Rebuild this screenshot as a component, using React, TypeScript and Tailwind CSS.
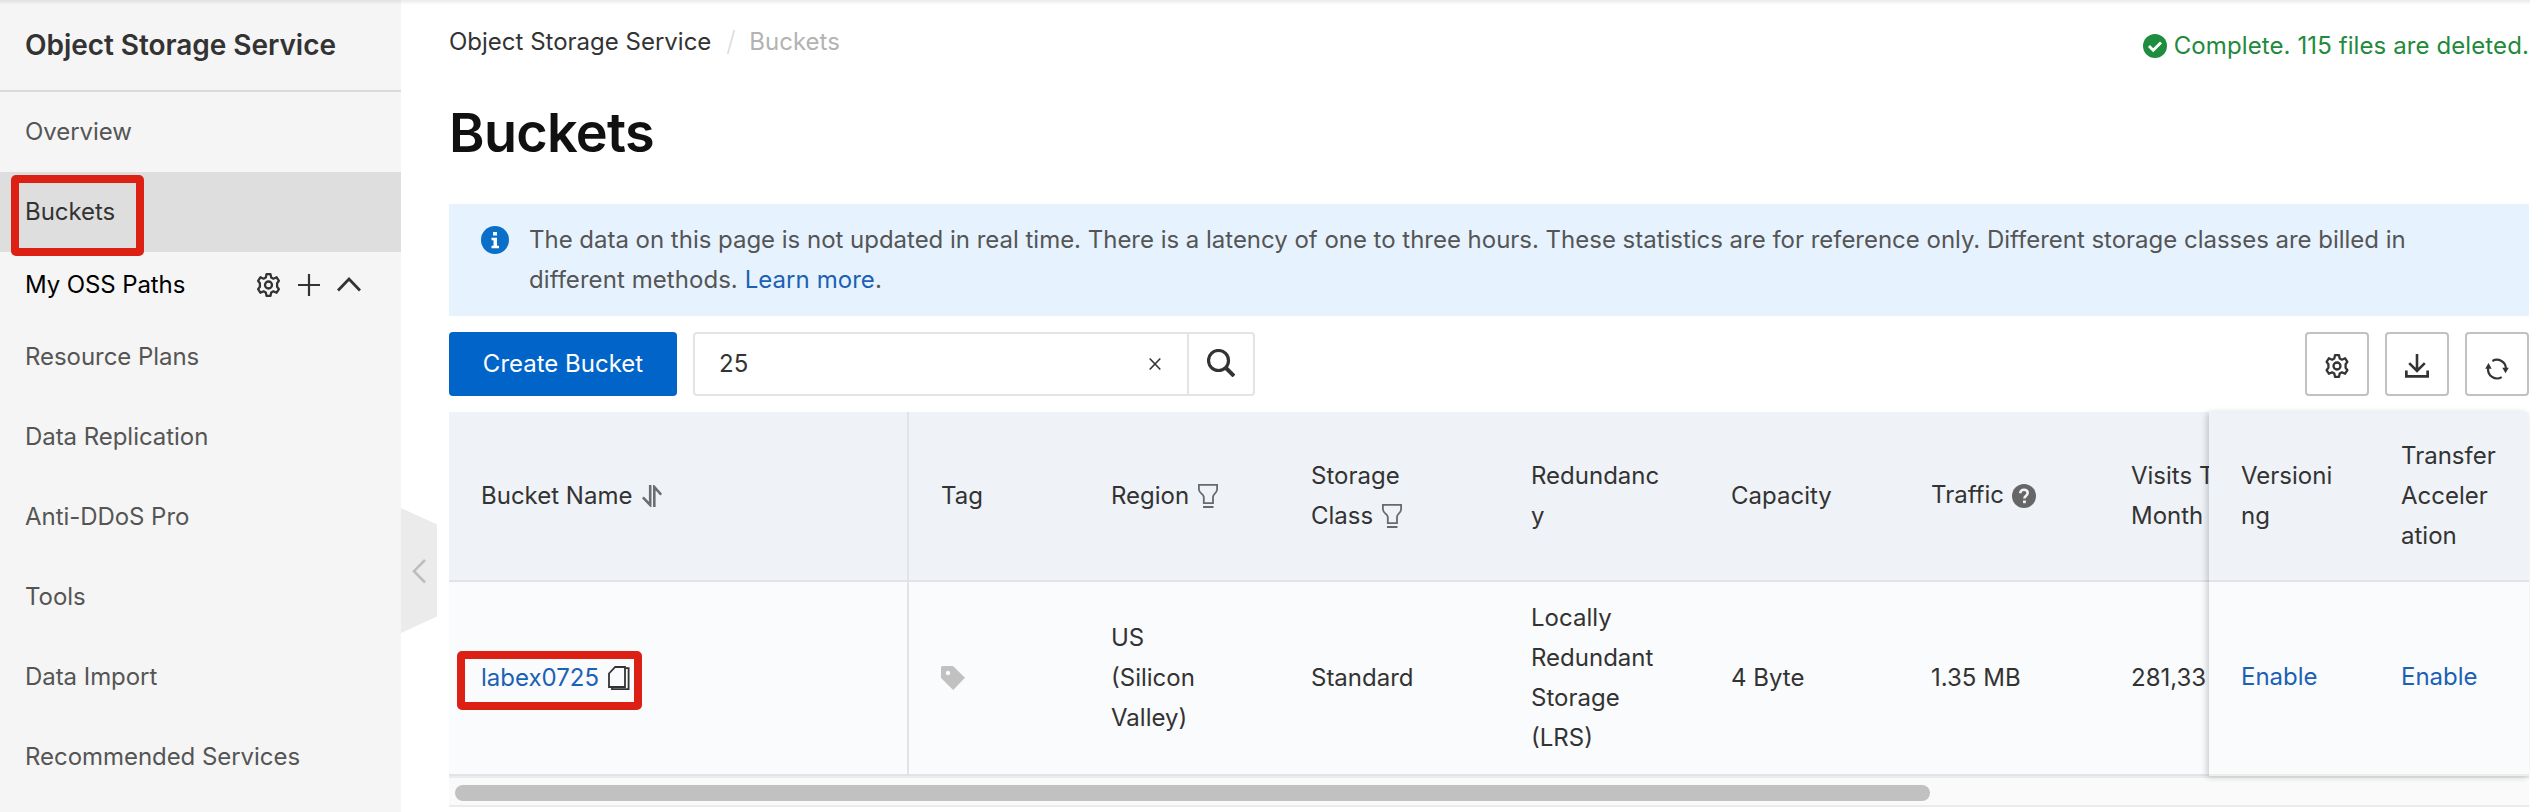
import type { ReactNode } from 'react';

function GearIcon({ className }: { className?: string }) {
  return (
    <svg viewBox="0 0 24 24" fill="none" stroke="currentColor" strokeWidth="2.3" strokeLinejoin="round" className={className}>
      <path d="M10 1.2h4l.7 3.3 2.2 1.2 3.2-1.4 2.3 3.6-1.8 2.4v3.4l1.8 2.4-2.3 3.6-3.2-1.4-2.2 1.2-.7 3.3h-4l-.7-3.3-2.2-1.2-3.2 1.4-2.3-3.6 1.8-2.4v-3.4L1.6 7.9l2.3-3.6 3.2 1.4 2.2-1.2z" />
      <circle cx="12" cy="12" r="3.5" />
    </svg>
  );
}

function FilterIcon() {
  return (
    <svg viewBox="0 0 22 24" fill="none" stroke="#666a6e" strokeWidth="1.8" className="h-6 w-[22px] shrink-0">
      <path d="M1.9 .9h18.200v4.600q-.3 2.300-2.100 3.900-1.800 1.600-2 3.400v6.300H6.800v-6.300q-.2-1.800-2.500-3.400-2.100-1.600-2.400-3.900z" />
      <path d="M6 23h10.500" strokeWidth="2" />
    </svg>
  );
}

function SortIcon() {
  return (
    <svg viewBox="0 0 20 22" fill="none" stroke="#6b6d70" strokeWidth="2.6" className="h-[22px] w-5">
      <path d="M8.2 0v20L.9 12.300" />
      <path d="M12.300 22V2l6.900 7.700" />
    </svg>
  );
}

function CopyIcon() {
  return (
    <svg viewBox="0 0 22 24" fill="none" stroke="#333" className="h-6 w-[22px]">
      <path d="M7.2 1h9.8v20H1V7.5z" strokeWidth="1.8" />
      <path d="M17.5 2.2H20.600V23.100H4v-2" strokeWidth="1.8" />
    </svg>
  );
}

function TagIcon() {
  return (
    <svg viewBox="0 0 24 24" className="h-6 w-6">
      <path fill="#c1c1c1" fillRule="evenodd" d="M0 1.5Q0 0 1.5 0H12l12 11.800L12.200 24 0 12zM7 4.800a2.200 2.200 0 1 0 0 4.400 2.200 2.200 0 0 0 0-4.400z" />
    </svg>
  );
}

function HelpIcon() {
  return (
    <svg viewBox="0 0 24 24" className="h-6 w-6">
      <circle cx="12" cy="12" r="12" fill="#666" />
      <path d="M8.300 9.300c0-2.200 1.500-3.600 3.700-3.600s3.700 1.300 3.700 3.300c0 2.500-3.300 2.800-3.300 5.400" fill="none" stroke="#eff3f8" strokeWidth="2.6" />
      <path d="M11 16.500h2.900v2.700H11z" fill="#eff3f8" />
    </svg>
  );
}

function Highlight({ className }: { className: string }) {
  return <div className={`pointer-events-none absolute z-20 rounded-[5px] border-8 border-[#dc2114] ${className}`} />;
}

function NavItem({ label, active }: { label: string; active?: boolean }) {
  return (
    <div
      className={`relative flex h-20 shrink-0 items-center pl-[25px] ${active ? 'bg-[#dedede] text-[#333]' : 'text-[#555]'}`}
    >
      <span className="tracking-[-0.05px]">{label}</span>
      {active && <Highlight className="top-[3px] left-[11px] h-[81px] w-[133px]" />}
    </div>
  );
}

function Sidebar() {
  return (
    <aside className="relative flex w-[401px] shrink-0 flex-col bg-[#f5f5f5]">
      <div className="flex h-[92px] shrink-0 items-center border-b-2 border-[#dadada] pl-[25px] text-[28px] font-semibold tracking-[-0.05px] text-[#333]">
        Object Storage Service
      </div>
      <NavItem label="Overview" />
      <NavItem label="Buckets" active />
      <div className="flex h-[65px] shrink-0 items-center pl-[25px] text-black">
        <span className="w-[231px] tracking-[-0.1px]">My OSS Paths</span>
        <GearIcon className="h-6 w-[25px] text-[#333]" />
        <svg viewBox="0 0 24 24" stroke="#333" strokeWidth="2.2" className="ml-4 h-6 w-6">
          <path d="M1 12h22M12 1v22" />
        </svg>
        <svg viewBox="0 0 24 24" fill="none" stroke="#333" strokeWidth="2.8" className="ml-4 h-6 w-6">
          <path d="M1 17.500 12 6l11 11.500" />
        </svg>
      </div>
      <NavItem label="Resource Plans" />
      <NavItem label="Data Replication" />
      <NavItem label="Anti-DDoS Pro" />
      <NavItem label="Tools" />
      <NavItem label="Data Import" />
      <NavItem label="Recommended Services" />
      <svg viewBox="0 0 36 126" className="absolute top-[508px] left-[401px] h-[126px] w-9">
        <path d="M0 0l36 16.500v92L0 125z" fill="#ebebeb" />
        <path d="M24 52L13 63.200 24 74.500" fill="none" stroke="#bdbdbd" strokeWidth="2.6" />
      </svg>
    </aside>
  );
}

function ToolButton({ children }: { children: ReactNode }) {
  return (
    <button className="flex size-16 items-center justify-center rounded-[4px] border-2 border-[#c1c1c1] bg-white text-[#333]">
      {children}
    </button>
  );
}

function Toolbar() {
  return (
    <div className="mt-4 flex h-16">
      <button className="w-[228px] rounded-[4px] bg-[#0064c8] text-white">Create Bucket</button>
      <div className="ml-4 flex w-[562px] rounded-[4px] border-2 border-[#e3e4e6] bg-white">
        <div className="flex flex-1 items-center justify-between pr-[26px] pl-[24px] text-[#333]">
          <span>25</span>
          <svg viewBox="0 0 12 14" stroke="#333" strokeWidth="1.6" className="h-[14px] w-3">
            <path d="M.7 1.500l10.600 11M11.300 1.500L.7 12.500" />
          </svg>
        </div>
        <div className="flex w-[66px] items-center justify-center border-l-2 border-[#e3e4e6]">
          <svg viewBox="0 0 28 28" fill="none" stroke="#333" strokeWidth="3.2" className="mb-[2px] size-7">
            <circle cx="11.500" cy="11.500" r="10" />
            <path d="M18.500 18.500L27 27" strokeWidth="4" />
          </svg>
        </div>
      </div>
      <div className="ml-auto flex gap-4">
        <ToolButton>
          <GearIcon className="mt-1 size-6" />
        </ToolButton>
        <ToolButton>
          <svg viewBox="0 0 24 24" fill="none" stroke="currentColor" className="mt-1 size-6">
            <path d="M12 0v17.500M4.200 9.200L12 17l7.800-7.800" strokeWidth="2.6" />
            <path d="M1.300 16.500v5.900h21.400v-5.900" strokeWidth="2.8" />
          </svg>
        </ToolButton>
        <ToolButton>
          <svg viewBox="0 0 24 24" fill="none" stroke="currentColor" strokeWidth="2.2" className="mt-[10px] size-6">
            <path d="M7.400 4A9 9 0 0 1 20.900 11" />
            <path d="M16.700 20.100A9 9 0 0 1 3.200 11" />
            <path d="M0.200 11.800L3.500 6l3.200 5.800zM17.300 10.800h6.500L20.500 16.200z" fill="currentColor" stroke="none" />
          </svg>
        </ToolButton>
      </div>
    </div>
  );
}

function Cell({ width, children }: { width: string; children: ReactNode }) {
  return <div className={`flex shrink-0 items-center pl-8 ${width}`}>{children}</div>;
}

function BucketTable() {
  return (
    <div className="mt-4 flex flex-col border-b-2 border-[#ebebeb] leading-10 text-[#333]">
      <div className="flex">
        <div className="flex w-[1760px] flex-col overflow-hidden">
          <div className="flex h-[170px] shrink-0 border-b-2 border-[#e1e3e5] bg-[#eff2f7]">
            <Cell width="w-[460px] border-r-2 border-[#e1e3e5]">
              <span className="mr-[10px]">Bucket Name</span>
              <SortIcon />
            </Cell>
            <Cell width="w-[170px]">Tag</Cell>
            <Cell width="w-[200px]">
              <span className="mr-2">Region</span>
              <FilterIcon />
            </Cell>
            <Cell width="w-[220px]">
              <div>
                Storage
                <div className="flex items-center gap-2">
                  Class
                  <FilterIcon />
                </div>
              </div>
            </Cell>
            <Cell width="w-[200px]">
              <span>
                Redundanc
                <br />y
              </span>
            </Cell>
            <Cell width="w-[200px]">Capacity</Cell>
            <Cell width="w-[200px]">
              <span className="mr-2 mb-[2px]">Traffic</span>
              <HelpIcon />
            </Cell>
            <Cell width="w-[200px]">
              <span>
                Visits This
                <br />
                Month
              </span>
            </Cell>
          </div>
          <div className="flex h-[194px] shrink-0 border-b-2 border-[#e1e3e5] bg-[#fafbfc]">
            <Cell width="relative w-[460px] border-r-2 border-[#e1e3e5]">
              <span className="mr-[9px] text-[#1c61b3]">labex0725</span>
              <CopyIcon />
              <Highlight className="top-[69px] left-[8px] h-[59px] w-[185px]" />
            </Cell>
            <Cell width="w-[170px]">
              <TagIcon />
            </Cell>
            <Cell width="w-[200px]">
              <span>
                US
                <br />
                (Silicon
                <br />
                Valley)
              </span>
            </Cell>
            <Cell width="w-[220px]">Standard</Cell>
            <Cell width="w-[200px]">
              <span>
                Locally
                <br />
                Redundant
                <br />
                Storage
                <br />
                (LRS)
              </span>
            </Cell>
            <Cell width="w-[200px]">4 Byte</Cell>
            <Cell width="w-[200px]">1.35 MB</Cell>
            <Cell width="w-[200px]">281,33</Cell>
          </div>
        </div>
        <div className="relative z-10 w-[320px] rounded-tr-[4px] shadow-[-2px_1px_6px_rgba(0,0,0,0.2)]">
          <div className="flex h-[170px] rounded-tr-[4px] border-b-2 border-[#e1e3e5] bg-[#eff2f7]">
            <Cell width="w-[160px]">
              <span>
                Versioni
                <br />
                ng
              </span>
            </Cell>
            <Cell width="w-[160px]">
              <span>
                Transfer
                <br />
                Acceler
                <br />
                ation
              </span>
            </Cell>
          </div>
          <div className="flex h-[194px] border-b-2 border-[#eceded] bg-[#fafbfc] pb-[2px] text-[#1c61b3]">
            <Cell width="w-[160px]">Enable</Cell>
            <Cell width="w-[160px]">Enable</Cell>
          </div>
        </div>
      </div>
      <div className="h-[29px] border-t-2 border-[#ebecec] bg-[#fafafa] pt-[7px] pl-[6px]">
        <div className="h-4 w-[1475px] rounded-full bg-[#c1c1c1]" />
      </div>
    </div>
  );
}

export default function App() {
  return (
    <div className="relative flex h-[812px] w-full overflow-hidden bg-white font-[Inter,'Liberation_Sans',sans-serif] text-[24px] leading-10">
      <div className="absolute inset-x-0 top-0 z-30 h-[5px] bg-linear-to-b from-black/8 to-transparent" />
      <Sidebar />
      <main className="flex min-w-0 flex-1 flex-col pr-px pl-12">
        <div className="flex h-[84px] shrink-0 items-center">
          <span className="text-[#333]">Object Storage Service</span>
          <svg viewBox="0 0 8 26" stroke="#dedede" strokeWidth="1.8" className="mr-[14px] ml-4 h-[26px] w-2">
            <path d="M7.300 1L.7 25" />
          </svg>
          <span className="text-[#b3b3b3]">Buckets</span>
          <div className="mt-2 ml-auto flex items-center gap-[7px] text-[#23893c]">
            <svg viewBox="0 0 24 24" className="size-6">
              <circle cx="12" cy="12" r="12" fill="#1e8e3e" />
              <path d="M6 12l4.200 4.200L18 8.400" fill="none" stroke="#fff" strokeWidth="2.8" />
            </svg>
            <span className="tracking-[0.1px]">Complete. 115 files are deleted.</span>
          </div>
        </div>
        <h1 className="h-[120px] shrink-0 pt-[21px] text-[54px] leading-[56px] font-semibold tracking-[-0.7px] text-[#111]">
          Buckets
        </h1>
        <div className="flex h-28 shrink-0 bg-[#e6f3ff] pt-4 pl-8 text-[#555]">
          <svg viewBox="0 0 28 28" className="mt-[6px] size-7 shrink-0">
            <circle cx="14" cy="14" r="14" fill="#0a6fc8" />
            <path d="M12 6h4v3.600h-4zM10.500 11.800h5.500v8h2v2.400h-7.500v-2.400H12.500v-5.600h-2z" fill="#fff" />
          </svg>
          <div className="ml-5">
            <p className="tracking-[-0.02px]">
              The data on this page is not updated in real time. There is a latency of one to three hours. These
              statistics are for reference only. Different storage classes are billed in
            </p>
            <p className="tracking-[0.06px]">
              different methods. <span className="text-[#1c61b3]">Learn more</span>.
            </p>
          </div>
        </div>
        <Toolbar />
        <BucketTable />
      </main>
    </div>
  );
}
